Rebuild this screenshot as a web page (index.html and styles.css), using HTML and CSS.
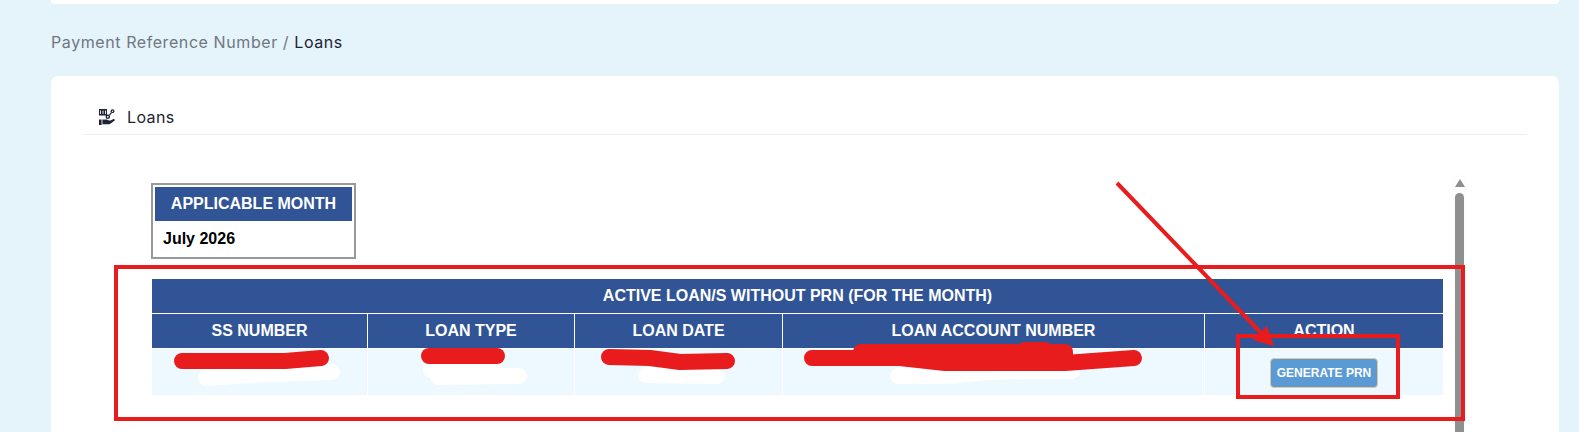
FILE: index.html
```html
<!DOCTYPE html>
<html lang="en">
<head>
<meta charset="utf-8">
<title>Loans</title>
<link rel="stylesheet" href="styles.css">
</head>
<body>
<div class="top-card"></div>
<nav class="breadcrumb"><span class="crumb-muted">Payment Reference Number / </span><span class="crumb-current">Loans</span></nav>
<main class="card">
  <header class="card-head">
    <svg class="loan-icon" viewBox="0 0 16 16" width="16" height="16" aria-hidden="true">
      <rect x="0" y="0" width="8" height="6.5" fill="#1b2233"/>
      <path d="M1.5 1.5V5M4 1.5V5M6.5 1.5V5" stroke="#fff" stroke-width="0.9"/>
      <circle cx="13.5" cy="2.2" r="1.9" fill="#1b2233"/>
      <circle cx="13.5" cy="2.2" r="0.7" fill="#fff"/>
      <circle cx="8.8" cy="7.8" r="2.3" fill="#1b2233"/>
      <circle cx="8.8" cy="7.8" r="0.9" fill="#fff"/>
      <path d="M10.5 6L12.3 3.8" stroke="#1b2233" stroke-width="1.2"/>
      <rect x="0" y="10.5" width="2.6" height="5.5" fill="#1b2233"/>
      <path d="M3.4 10.6H7.5L10 11.6H11.6L15 9.8L16 11.2L10.6 15.2H3.4Z" fill="#1b2233"/>
    </svg>
    <span class="card-title">Loans</span>
  </header>
  <div class="scroll-area">
    <div class="scroll-content">
      <table class="month-box">
        <tr><th>APPLICABLE MONTH</th></tr>
        <tr><td>July 2026</td></tr>
      </table>
      <table class="loans">
        <colgroup>
          <col class="col-ss"><col class="col-type"><col class="col-date"><col class="col-acct"><col class="col-action">
        </colgroup>
        <tr><th colspan="5" class="last">ACTIVE LOAN/S WITHOUT PRN (FOR THE MONTH)</th></tr>
        <tr>
          <th>SS NUMBER</th><th>LOAN TYPE</th><th>LOAN DATE</th><th>LOAN ACCOUNT NUMBER</th><th class="last">ACTION</th>
        </tr>
        <tr>
          <td></td><td></td><td></td><td></td>
          <td class="last"><button class="prn-btn" type="button">GENERATE PRN</button></td>
        </tr>
      </table>
    </div>
    <div class="scrollbar">
      <div class="scroll-arrow"></div>
      <div class="scroll-thumb"></div>
    </div>
  </div>
</main>
<svg class="markup" viewBox="0 0 1579 432" width="1579" height="432" aria-hidden="true">
  <g class="scribble-white">
    <path d="M206 378L250 375L332 372"/>
    <path d="M431 370L495 370M438 377L519 376"/>
    <path d="M646 375L717 376"/>
    <path d="M898 376L950 376L985 372L1072 371"/>
  </g>
  <g class="scribble-red">
    <path d="M182 361L285 361L321 358"/>
    <path d="M429 356L497 356"/>
    <path d="M609 357L650 358L680 362L727 361"/>
    <path d="M812 358L900 358L945 363L1065 363L1134 358"/>
    <path d="M861 352L1065 352L1065 358L861 358Z"/>
    <path d="M1025 350L1045 350"/>
  </g>
  <g class="frames">
    <rect x="116" y="267" width="1347" height="152"/>
    <rect x="1238" y="336" width="160" height="61"/>
    <path d="M1117 183L1262 334"/>
  </g>
  <path class="arrow-head" d="M1274 346L1267 326L1253 340Z"/>
</svg>
</body>
</html>
```
FILE: styles.css
```css
* { box-sizing: border-box; }
html, body { margin: 0; padding: 0; }
body {
  position: relative;
  width: 1579px;
  height: 432px;
  overflow: hidden;
  background: #e5f3fb;
  font-family: "Liberation Sans", Arial, sans-serif;
}
.top-card {
  height: 4px;
  margin: 0 20px 0 51px;
  background: #fff;
  border-radius: 0 0 6px 6px;
}
.breadcrumb {
  height: 72px;
  padding: 28px 0 0 51px;
  font: 16px/20px Inter, "Noto Sans", sans-serif;
  letter-spacing: 0.58px;
}
.crumb-muted { color: #6f7780; }
.crumb-current { color: #1c2433; }
.card {
  height: 356px;
  margin: 0 20px 0 51px;
  padding: 0 32px;
  overflow: hidden;
  background: #fff;
  border-radius: 7px 7px 0 0;
}
.card-head {
  display: flex;
  align-items: center;
  gap: 12px;
  height: 59px;
  padding: 24px 0 0 16px;
  border-bottom: 1px solid #eeeeee;
}
.loan-icon { flex: none; margin-top: -1px; }
.card-title {
  margin-top: -1px;
  font: 16px/20px Inter, "Noto Sans", sans-serif;
  letter-spacing: 0.4px;
  color: #1c2433;
}
.scroll-area {
  display: flex;
  align-items: flex-start;
  margin-top: 40px;
}
.scroll-content {
  width: 1369px;
  padding: 8px 0 0 68px;
}
.month-box {
  width: 205px;
  height: 76px;
  border: 2px solid #999;
  border-spacing: 2px;
  font-size: 16px;
  font-weight: bold;
}
.month-box th {
  height: 34px;
  padding: 0;
  background: #305496;
  color: #fff;
  text-align: center;
}
.month-box td {
  padding: 0 0 0 8px;
  color: #000;
}
.loans {
  width: 1291px;
  margin: 20px 0 0 1px;
  table-layout: fixed;
  border-spacing: 0;
  font-size: 16px;
}
.col-ss { width: 216px; }
.col-type { width: 207px; }
.col-date { width: 208px; }
.col-acct { width: 422px; }
.col-action { width: 238px; }
.loans th {
  height: 35px;
  padding: 0;
  background: #305496;
  color: #fff;
  font-weight: bold;
  text-align: center;
  border-right: 1px solid #fff;
  border-bottom: 1px solid #fff;
}
.loans td {
  height: 46px;
  padding: 0;
  background: #edf8ff;
  text-align: center;
  border-right: 1px solid #fff;
}
.loans .last { border-right: 0; }
.prn-btn {
  display: inline-block;
  width: 108px;
  height: 30px;
  padding: 0;
  margin-top: 2px;
  background: #5b9bd5;
  border: 1px solid #e6c892;
  border-radius: 4px;
  color: #fff;
  font: bold 12px "Liberation Sans", Arial, sans-serif;
}
.scrollbar {
  flex: none;
  width: 15px;
  height: 257px;
  padding: 4px 3px 0;
  background: #fdfdfd;
}
.scroll-arrow {
  width: 0;
  height: 0;
  margin: 0 auto 6px;
  border-left: 5px solid transparent;
  border-right: 5px solid transparent;
  border-bottom: 8px solid #8f8f8f;
}
.scroll-thumb {
  height: 239px;
  background: #8f8f8f;
  border-radius: 5px 5px 0 0;
}
.markup {
  position: absolute;
  top: 0;
  left: 0;
  pointer-events: none;
}
.scribble-white path {
  fill: none;
  stroke: #fff;
  stroke-width: 16;
  stroke-linecap: round;
  stroke-linejoin: round;
}
.scribble-red path {
  fill: #e81c1c;
  stroke: #e81c1c;
  stroke-width: 16;
  stroke-linecap: round;
  stroke-linejoin: round;
}
.frames rect, .frames path {
  fill: none;
  stroke: #e81c1c;
  stroke-width: 4;
}
.arrow-head { fill: #e81c1c; }
```
